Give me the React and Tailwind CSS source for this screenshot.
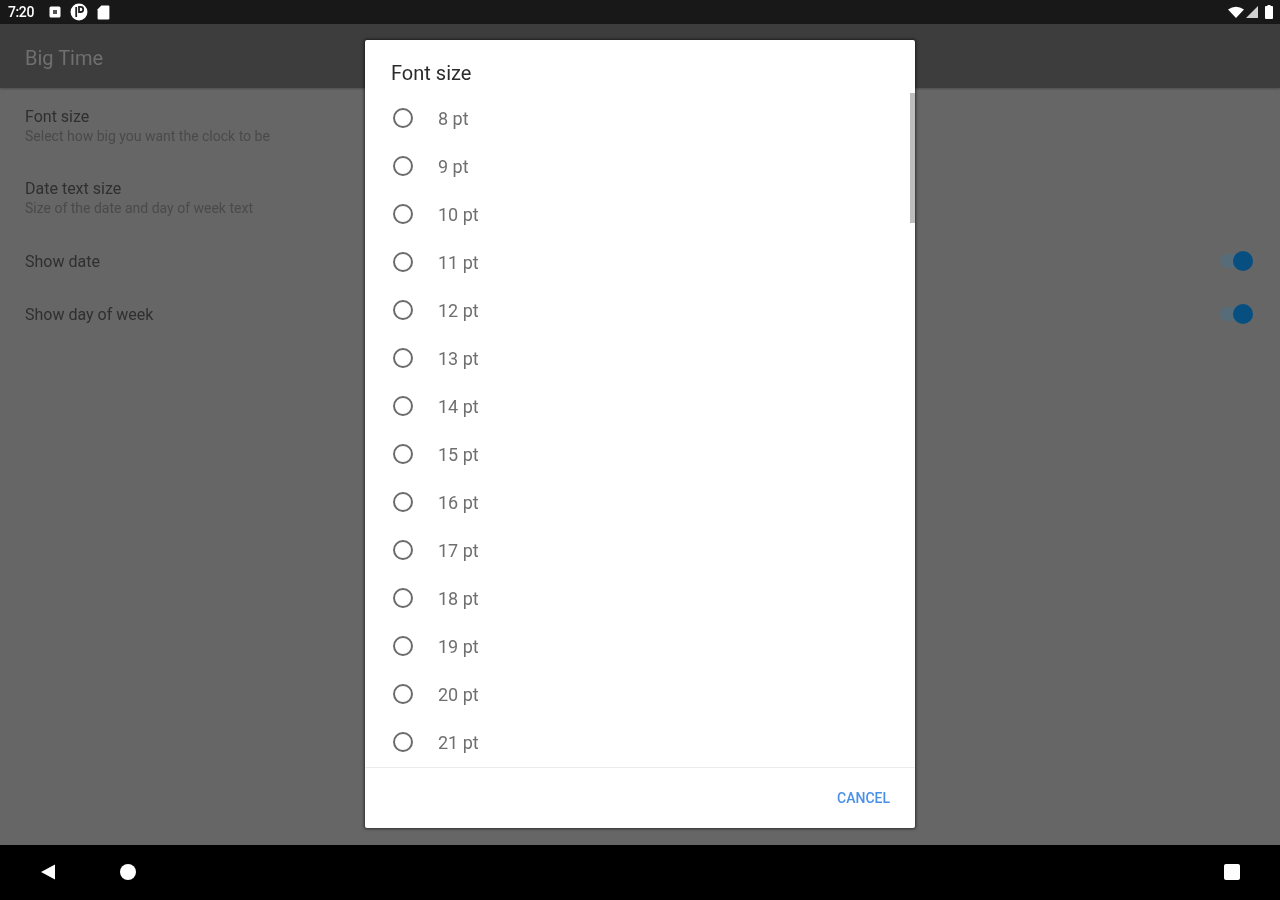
import { useState } from 'react';

const SIZES = [8, 9, 10, 11, 12, 13, 14, 15, 16, 17, 18, 19, 20, 21];

function Toggle() {
  return (
    <div className="relative w-[33px] h-[20px] flex items-center">
      <div className="w-[30px] h-[14px] rounded-full bg-[#566c79]" />
      <div className="absolute right-0 top-0 w-[20px] h-[20px] rounded-full bg-[#064f80]" />
    </div>
  );
}

function StatusBar() {
  return (
    <div className="h-6 bg-[#181818] flex items-center justify-between pl-[8px] pr-[6px] blur-[0.6px]">
      <div className="flex items-center">
        <span className="text-[14px] font-medium text-white w-[29px] tracking-[-0.4px]">7:20</span>
        <svg width="12" height="12" viewBox="0 0 12 12" className="ml-[12px]">
          <rect x="0.5" y="0.5" width="11" height="11" rx="1.5" fill="#fff" />
          <rect x="4" y="4" width="4" height="4" fill="#555" />
        </svg>
        <svg width="18" height="18" viewBox="0 0 16 16" className="ml-[9px]">
          <circle cx="8" cy="8" r="7.5" fill="#fff" />
          <path d="M5.5 3.5v9M8 3.5h1.5a2 2 0 0 1 0 4.5H8z" stroke="#222" strokeWidth="1.6" fill="none" />
        </svg>
        <svg width="13" height="15" viewBox="0 0 12 14" className="ml-[9px]">
          <path d="M4 0.5h6.5a1 1 0 0 1 1 1v11a1 1 0 0 1-1 1h-9a1 1 0 0 1-1-1V4z" fill="#fff" />
        </svg>
      </div>
      <div className="flex items-center gap-[2px]">
        <svg width="16" height="12" viewBox="0 0 16 12">
          <path d="M0 3.5 Q8 -2 16 3.5 L8 12z" fill="#fff" />
        </svg>
        <svg width="12" height="12" viewBox="0 0 11 11">
          <path d="M11 0v11H0z" fill="#d0d0d0" />
        </svg>
        <svg width="10" height="14" viewBox="0 0 9 14" className="ml-[4px]">
          <rect x="0.5" y="1" width="8" height="13" rx="1" fill="#fff" />
          <rect x="3" y="0" width="3" height="2" fill="#fff" />
        </svg>
      </div>
    </div>
  );
}

function SettingRow({ title, sub, className }) {
  return (
    <div className={className}>
      <div className="text-[16px] leading-[16px] text-[#2f2f2f]">{title}</div>
      {sub && <div className="text-[14px] leading-[14px] mt-[4px] text-[#4a4a4a]">{sub}</div>}
    </div>
  );
}

export default function App() {
  const [selected, setSelected] = useState(null);

  return (
    <div className="relative w-[1280px] h-[900px] overflow-hidden bg-[#666666] flex flex-col font-['Roboto',sans-serif]">
      <StatusBar />
      <div className="h-16 bg-[#3d3d3e] flex items-center pl-[25px] pt-[4px] shadow-[0_1px_2px_rgba(0,0,0,0.25)] blur-[0.6px]">
        <span className="text-[20px] text-[#6f6f6f]">Big Time</span>
      </div>

      <div className="flex-1 pl-[25px] pr-[27px] pt-[21px] blur-[0.6px]">
        <SettingRow title="Font size" sub="Select how big you want the clock to be" />
        <SettingRow className="mt-[38px]" title="Date text size" sub="Size of the date and day of week text" />
        <div className="flex items-center justify-between mt-[36px]">
          <SettingRow className="pt-[2px]" title="Show date" />
          <Toggle />
        </div>
        <div className="flex items-center justify-between mt-[33px]">
          <SettingRow className="pt-[2px]" title="Show day of week" />
          <Toggle />
        </div>
      </div>

      <div className="h-[55px] bg-black flex items-center justify-between pl-[40px] pr-[40px] pb-[1px] blur-[0.6px]">
        <div className="flex items-center">
          <svg width="16" height="16" viewBox="0 0 16 16">
            <path d="M1 8 15 0.5v15z" fill="#fff" />
          </svg>
          <div className="w-[16px] h-[16px] rounded-full bg-white ml-[64px]" />
        </div>
        <div className="w-[16px] h-[16px] rounded-[2px] bg-white" />
      </div>

      {/* Dialog */}
      <div className="absolute left-[365px] top-[40px] w-[550px] h-[788px] bg-white rounded-[2px] shadow-[0_0_3px_1px_rgba(0,0,0,0.55)] flex flex-col overflow-hidden">
        <div className="absolute right-0 top-[53px] w-[5px] h-[130px] bg-[#bdbdbd]" />
        <div className="h-[55px] pl-[26px] pt-[22px] text-[20px] leading-[22px] text-[#2b2b2b] blur-[0.5px]">Font size</div>
        <div className="flex-1 overflow-hidden">
          {SIZES.map((s) => (
            <div key={s} onClick={() => setSelected(s)} className="h-[48px] flex items-center pl-[28px] blur-[0.5px]">
              <div className="w-[20px] h-[20px] mb-[2px] rounded-full border-2 border-[#6b6b6b]" />
              <span className="ml-[25px] mb-[2px] text-[18px] text-[#6f6f6f]">{s} pt</span>
            </div>
          ))}
        </div>
        <div className="h-[61px] border-t border-[#ececec] flex items-center justify-end pr-[25px]">
          <span className="text-[14px] font-medium text-[#4a90e8] blur-[0.5px]">CANCEL</span>
        </div>
      </div>
    </div>
  );
}
